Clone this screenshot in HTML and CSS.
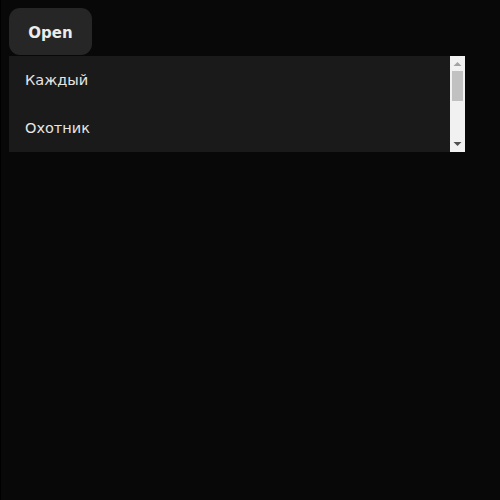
FILE: index.html
```html
<!DOCTYPE html>
<html>
<head>
<meta charset="utf-8">
<link rel="stylesheet" href="styles.css">
</head>
<body>
<div class="page">
  <button class="open-btn">Open</button>
  <div class="listbox">
    <div class="items">
      <div class="item">Каждый</div>
      <div class="item">Охотник</div>
    </div>
    <div class="scrollbar">
      <div class="sb-btn">
        <svg width="15" height="15" viewBox="0 0 15 15"><polygon points="3.5,10 11.5,10 7.5,6" fill="#a3a3a3"/></svg>
      </div>
      <div class="sb-track"><div class="sb-thumb"></div></div>
      <div class="sb-btn">
        <svg width="15" height="15" viewBox="0 0 15 15"><polygon points="3.5,5 11.5,5 7.5,9" fill="#505050"/></svg>
      </div>
    </div>
  </div>
</div>
</body>
</html>
```
FILE: styles.css
```css
html, body {
  margin: 0;
  height: 100%;
}
body {
  background: #080808;
  border-left: 1px solid #000;
  box-sizing: border-box;
  font-family: "DejaVu Sans", sans-serif;
}
.page {
  padding: 8px;
  display: flex;
  flex-direction: column;
  align-items: flex-start;
}
.open-btn {
  width: 83px;
  height: 47px;
  border: none;
  border-radius: 11px;
  background: #262626;
  color: #ececec;
  font-family: "DejaVu Sans", sans-serif;
  font-weight: bold;
  font-size: 15px;
  padding: 2px 0 0 0;
  margin: 0 0 1px 0;
}
.listbox {
  width: 456px;
  height: 96px;
  display: flex;
  background: #1a1a1a;
}
.items {
  flex: 1;
  display: flex;
  flex-direction: column;
}
.item {
  height: 48px;
  box-sizing: border-box;
  padding: 0 0 0 16px;
  display: flex;
  align-items: center;
  color: #e6e6e6;
  font-size: 14.5px;
}
.scrollbar {
  width: 15px;
  background: #f1f1f1;
  display: flex;
  flex-direction: column;
}
.sb-btn {
  height: 15px;
  display: flex;
}
.sb-track {
  flex: 1;
  display: flex;
  flex-direction: column;
  padding: 0 2px;
}
.sb-thumb {
  height: 30px;
  background: #c1c1c1;
}
```
